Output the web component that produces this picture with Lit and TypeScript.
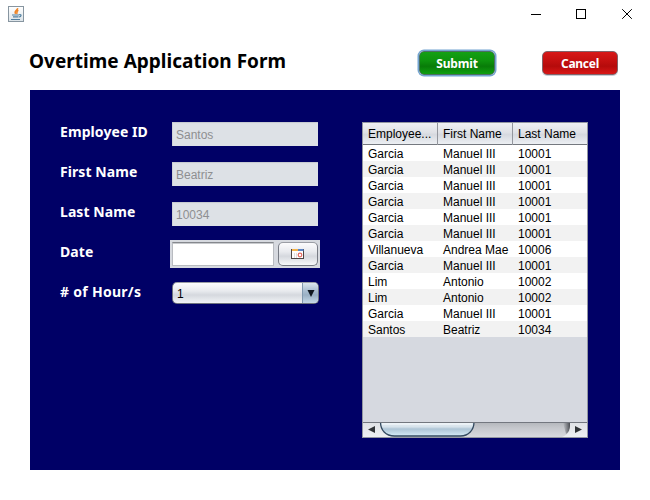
import { LitElement, html, css } from "lit";
import { customElement, property, state } from "lit/decorators.js";

@customElement("window-bar")
class WindowBar extends LitElement {
  static styles = css`
    :host { display: flex; height: 28px; justify-content: space-between; }
    .logo { margin: 6px 0 0 8px; display: block; }
    .controls { display: flex; margin: 0 1px 0 0; }
    .controls svg { display: block; width: 46px; height: 28px; }
    .line { fill: none; stroke: #000; stroke-width: 1; }
  `;
  render() {
    return html`
      <svg class="logo" width="16" height="16" viewBox="0 0 16 16">
        <defs>
          <linearGradient id="tile" x2="0" y2="1">
            <stop offset="0" stop-color="#fff" /><stop offset="1" stop-color="#dbe3e8" />
          </linearGradient>
        </defs>
        <rect x=".5" y=".5" width="15" height="15" fill="url(#tile)" stroke="#8795a0" />
        <path d="M9.6 2.200C10 4 5.600 4.600 7.600 7.800M10.400 4.200C7.800 5.200 9.800 6 8.600 7.800" fill="none" stroke="#ee8325" stroke-width="1.500" />
        <path d="M4 9h7M5 10.800h5.500M3 13.500h9M11.200 8.600c2.600-.4 2.400 2.200-.2 2.400" fill="none" stroke="#517fa0" stroke-width="1.200" />
      </svg>
      <div class="controls">
        <svg viewBox="0 0 46 28"><path class="line" d="M20 14.500h10" /></svg>
        <svg viewBox="0 0 46 28"><rect class="line" x="19.500" y="9.500" width="9" height="9" /></svg>
        <svg viewBox="0 0 46 28"><path class="line" d="M19.200 9.200l9.600 9.600M28.800 9.200l-9.600 9.600" /></svg>
      </div>
    `;
  }
}

@customElement("form-fields")
class FormFields extends LitElement {
  static styles = css`
    :host {
      display: grid;
      grid-template-columns: 110px 150px;
      grid-auto-rows: 40px;
      margin-top: 24px;
      font: 12px "Liberation Sans", Arial, sans-serif;
    }
    .label { color: #fff; font: bold 14px/36px "Noto Sans", "Open Sans", sans-serif; letter-spacing: 0.08px; white-space: nowrap; }
    .hours { letter-spacing: 0.28px; }
    .cell { display: flex; align-items: center; }
    .field {
      box-sizing: border-box; width: 146px; height: 24px; margin-left: 2px; padding: 1px 0 0 4px;
      line-height: 24px; color: #8e8f91; background: #dde1e6;
      box-shadow: inset 0 2px 1px -1px #c5c9cf, inset 1px 0 #cfd2d7;
    }
    .date {
      box-sizing: border-box; width: 150px; height: 28px; padding: 2px; display: flex;
      justify-content: space-between; background: #d6d9df;
    }
    .entry {
      box-sizing: border-box; width: 102px; height: 24px; background: #fff;
      border: 1px solid #b8bbc0; border-top-color: #85888d; box-shadow: inset 0 1px #c8cacd;
    }
    .pick {
      box-sizing: border-box; width: 40px; height: 24px; display: grid; place-items: center;
      border: 1px solid #777b84; border-top-color: #9a9da4; border-radius: 5px;
      background: linear-gradient(#fcfcfd, #e8eaee 40%, #d5d8de 60%, #f6f8fa);
    }
    .combo {
      box-sizing: border-box; width: 147px; height: 22px; margin: 0 0 2px 2px; display: flex;
      justify-content: space-between; overflow: hidden;
      border: 1px solid #6f747d; border-top-color: #9a9da4; border-radius: 5px;
      background: linear-gradient(#fcfcfd, #e8eaee 40%, #d5d8de 60%, #f2f4f7);
    }
    .value { padding-left: 4px; line-height: 23px; color: #000; }
    .arrow {
      box-sizing: border-box; width: 16px; display: grid; place-items: center;
      border-left: 1px solid #8098ae;
      background: linear-gradient(#dce6ee, #a9bdd0 40%, #9ab0c4 60%, #c5d9e8);
    }
  `;
  render() {
    return html`
      <div class="label">Employee ID</div><div class="cell"><div class="field">Santos</div></div>
      <div class="label">First Name</div><div class="cell"><div class="field">Beatriz</div></div>
      <div class="label">Last Name</div><div class="cell"><div class="field">10034</div></div>
      <div class="label">Date</div>
      <div class="cell">
        <div class="date">
          <div class="entry"></div>
          <div class="pick">
            <svg width="14" height="11" viewBox="0 0 14 11">
              <rect x=".5" y=".5" width="12" height="9" fill="#fff" stroke="#4d4545" />
              <path d="M1 1h6" stroke="#f5b54c" stroke-width="2" />
              <path d="M7 1h5.500" stroke="#5a86c8" stroke-width="2" />
              <path d="M3.500 4v5M5.500 4v5" stroke="#e2dfdf" />
              <circle cx="9" cy="6" r="1.800" fill="#fff" stroke="#e46a62" stroke-width="1.200" />
            </svg>
          </div>
        </div>
      </div>
      <div class="label hours"># of Hour/s</div>
      <div class="cell">
        <div class="combo">
          <span class="value">1</span>
          <span class="arrow"><svg width="8" height="7" viewBox="0 0 8 7"><path d="M.5 0h7L4 7z" fill="#111820" /></svg></span>
        </div>
      </div>
    `;
  }
}

type Row = [string, string, string];

@customElement("records-table")
class RecordsTable extends LitElement {
  @property({ attribute: false }) rows: Row[] = [];
  static styles = css`
    :host {
      box-sizing: border-box; display: flex; flex-direction: column; width: 226px; height: 316px;
      border: 1px solid #9296a1; background: #d6d9e0; color: #000;
      font: 12px "Liberation Sans", Arial, sans-serif;
    }
    .head, .row { display: grid; grid-template-columns: 75px 75px 1fr; white-space: nowrap; }
    .head { height: 21px; border-bottom: 1px solid #74787f; line-height: 22px; background: linear-gradient(#eff0f3, #dfe1e6 45%, #d6d9df 55%, #eceff3); }
    .head span { box-sizing: border-box; padding-left: 5px; border-right: 1px solid #93969d; }
    .head span:last-child { border-right: 0; }
    .row { height: 16px; line-height: 18px; background: #fff; }
    .row:nth-child(even) { background: #f2f2f2; }
    .row span { padding-left: 5px; }
    .body { flex: 1; }
    .scroll { display: block; height: 15px; width: 224px; }
  `;
  render() {
    return html`
      <div class="head"><span>Employee...</span><span>First Name</span><span>Last Name</span></div>
      <div class="body">
        ${this.rows.map((r) => html`<div class="row">${r.map((c) => html`<span>${c}</span>`)}</div>`)}
      </div>
      <svg class="scroll" viewBox="0 0 224 15">
        <defs>
          <linearGradient id="track" x2="0" y2="1"><stop offset="0" stop-color="#b2b5ba" /><stop offset=".4" stop-color="#c5c7cc" /><stop offset="1" stop-color="#d8dade" /></linearGradient>
          <linearGradient id="thumb" x2="0" y2="1"><stop offset="0" stop-color="#e8f0f6" /><stop offset=".35" stop-color="#d6e2eb" /><stop offset=".5" stop-color="#aec5d6" /><stop offset="1" stop-color="#d6ecf8" /></linearGradient>
          <linearGradient id="end" x2="0" y2="1"><stop offset="0" stop-color="#dfe1e5" /><stop offset="1" stop-color="#eef0f2" /></linearGradient>
          <linearGradient id="shade"><stop offset="0" stop-color="#44474e" stop-opacity="0" /><stop offset="1" stop-color="#34373d" /></linearGradient>
        </defs>
        <rect width="224" height="15" fill="url(#track)" />
        <path d="M0 0h17c0 8 5 13 13 15H0z" fill="url(#end)" />
        <path d="M200 1h7v3q0 5-4 8z" fill="url(#shade)" opacity=".85" />
        <path d="M207 0h17v15h-25c5-2 8-5 8-10z" fill="url(#end)" />
        <path d="M17.500 0c0 8 5 14 14 14h66c8 0 13.500-6 13.500-14z" fill="url(#thumb)" stroke="#33495f" stroke-width="1.300" />
        <path d="M0 .5h224" stroke="#73777f" />
        <path d="M19 2h90" stroke="#f7fafc" />
        <path d="M5 7.500l7-3.500v7zM219 7.500l-7-3.500v7z" fill="#303336" />
      </svg>
    `;
  }
}

@customElement("app-root")
class AppRoot extends LitElement {
  @state() rows: Row[] = [
    ...Array.from({ length: 6 }, (): Row => ["Garcia", "Manuel III", "10001"]),
    ["Villanueva", "Andrea Mae", "10006"],
    ["Garcia", "Manuel III", "10001"],
    ["Lim", "Antonio", "10002"],
    ["Lim", "Antonio", "10002"],
    ["Garcia", "Manuel III", "10001"],
    ["Santos", "Beatriz", "10034"],
  ];
  static styles = css`
    :host { display: block; width: 650px; height: 500px; overflow: hidden; background: #fff; }
    .top { display: flex; height: 62px; padding: 0 32px 0 29px; align-items: flex-start; }
    .title { flex: 1; font: bold 19px/28px "Noto Sans", "Open Sans", sans-serif; letter-spacing: 0.02px; margin-top: 19px; white-space: nowrap; color: #000; }
    .btn {
      box-sizing: border-box; width: 76px; height: 24px; margin-top: 23px; text-align: center; color: #fff;
      font: bold 12px/23px "Noto Sans", "Open Sans", sans-serif; letter-spacing: -0.3px; border-radius: 5px;
    }
    .submit { letter-spacing: -0.2px; margin-right: 47px; border: 1px solid #4c6f62; background: linear-gradient(#14a014, #0e930e 40%, #087c08 65%, #10a010); box-shadow: 0 0 0 1.500px #73a4d1; }
    .cancel { border: 1px solid #82636a; background: linear-gradient(#d81818, #c41010 40%, #b50b0b 65%, #da1616); box-shadow: 0 1px #c9ced6; }
    .panel { box-sizing: border-box; display: flex; width: 590px; height: 380px; margin-left: 30px; padding: 0 32px 0 30px; justify-content: space-between; background: #000066; }
    .records { margin-top: 32px; }
  `;
  render() {
    return html`
      <window-bar></window-bar>
      <div class="top">
        <div class="title">Overtime Application Form</div>
        <div class="btn submit">Submit</div>
        <div class="btn cancel">Cancel</div>
      </div>
      <div class="panel">
        <form-fields></form-fields>
        <records-table class="records" .rows=${this.rows}></records-table>
      </div>
    `;
  }
}
